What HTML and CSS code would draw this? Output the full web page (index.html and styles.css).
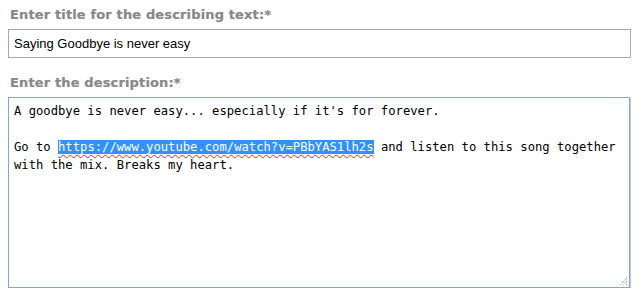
FILE: index.html
```html
<!DOCTYPE html>
<html>
<head>
<meta charset="utf-8">
<link rel="stylesheet" href="styles.css">
</head>
<body>
<form class="form">
  <div class="field">
    <label class="label">Enter title for the describing text:*</label>
    <div class="input">Saying Goodbye is never easy</div>
  </div>
  <div class="field">
    <label class="label">Enter the description:*</label>
    <div class="textarea"><div class="line">A goodbye is never easy... especially if it's for forever.</div><div class="line">&nbsp;</div><div class="line">Go to <span class="sel">https://www.youtube.com/watch?v=PBbYAS1lh2s</span> and listen to this song together</div><div class="line">with the mix. Breaks my heart.</div><svg class="grip" width="11" height="11" viewBox="0 0 11 11"><path d="M10 3 L3 10 M10 6 L6 10 M10 9 L9 10" stroke="#777" stroke-width="1" stroke-dasharray="1 1" fill="none"/></svg></div>
  </div>
</form>
</body>
</html>
```

FILE: styles.css
```css
html, body {
  margin: 0;
  padding: 0;
  background: #fff;
}
.form {
  display: flex;
  flex-direction: column;
  gap: 15px;
  padding: 5px 6px 0 8px;
}
.field {
  display: flex;
  flex-direction: column;
  gap: 5px;
}
.label {
  font-family: "DejaVu Sans", Verdana, sans-serif;
  font-weight: bold;
  font-size: 13px;
  letter-spacing: 0.14px;
  color: #888;
  padding-left: 2px;
  line-height: 19px;
  -webkit-text-stroke: 0.2px #888;
}
.input {
  height: 27px;
  border: 1px solid #a9a9a9;
  font-family: "Liberation Sans", Arial, sans-serif;
  font-size: 13px;
  line-height: 27px;
  padding-left: 5px;
  color: #000;
}
.textarea {
  position: relative;
  height: 181px;
  border: 1px solid #7fa3e6;
  box-shadow: 1px 1px 0 #b9cdf1;
  padding: 4px 5px;
  margin-right: 1px;
  font-family: "DejaVu Sans Mono", Consolas, monospace;
  font-size: 12.2px;
  line-height: 18px;
  color: #000;
  white-space: pre;
}
.sel {
  background: #3390ff;
  color: #fff;
  text-decoration: underline wavy #e22;
  text-decoration-thickness: 1px;
  text-underline-offset: 3px;
}
.grip {
  position: absolute;
  right: 1px;
  bottom: 1px;
}
```
